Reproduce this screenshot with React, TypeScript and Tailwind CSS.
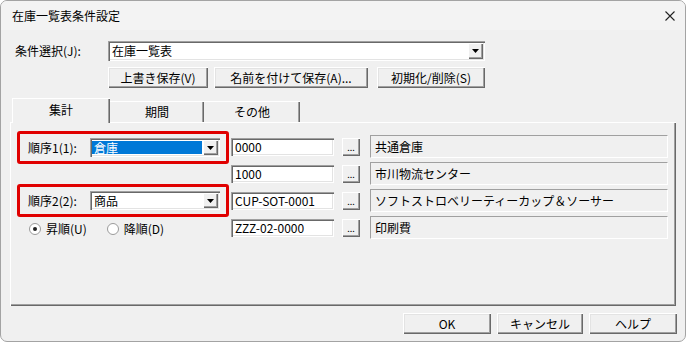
import React from 'react';

const rows = [
  { code: '0000', name: '共通倉庫' },
  { code: '1000', name: '市川物流センター' },
  { code: 'CUP-SOT-0001', name: 'ソフトストロベリーティーカップ＆ソーサー' },
  { code: 'ZZZ-02-0000', name: '印刷費' },
];

function Btn({ w, children }: { w: string; children: React.ReactNode }) {
  return (
    <div
      className={`${w} h-full flex items-center justify-center bg-[#f0f0f0] shadow-[inset_1px_1px_0_#fff,inset_-1px_-1px_0_#696969,inset_-2px_-2px_0_#a0a0a0,inset_2px_2px_0_#e3e3e3]`}
    >
      {children}
    </div>
  );
}

function DropBtn() {
  return (
    <div className="w-[15px] h-full flex items-center justify-center bg-[#f0f0f0] shadow-[inset_1px_1px_0_#fff,inset_-1px_-1px_0_#696969,inset_-2px_-2px_0_#a0a0a0]">
      <svg width="7" height="4" viewBox="0 0 7 4">
        <path d="M0 0H7L3.5 4Z" fill="#000" />
      </svg>
    </div>
  );
}

function Combo({
  value,
  selected,
  w,
}: {
  value: string;
  selected?: boolean;
  w: string;
}) {
  return (
    <div
      className={`${w} h-full flex items-stretch bg-white p-[2px] shadow-[inset_1px_1px_0_#a0a0a0,inset_2px_2px_0_#696969,inset_-1px_-1px_0_#fff,inset_-2px_-2px_0_#e3e3e3]`}
    >
      <div className="flex-1 flex items-center py-[1px] pr-[1px]">
        {selected ? (
          <div className="w-full h-full flex items-center bg-[#0078d7] text-white pl-[2px]">
            {value}
          </div>
        ) : (
          <span className="pl-[2px]">{value}</span>
        )}
      </div>
      <DropBtn />
    </div>
  );
}

function Radio({ checked }: { checked?: boolean }) {
  return (
    <svg width="12" height="12" viewBox="0 0 12 12">
      <circle cx="6" cy="6" r="5.5" fill="#fff" stroke="#9a9a9a" />
      {checked && <circle cx="6" cy="6" r="2" fill="#222" />}
    </svg>
  );
}

function OrderBox({ label, value, selected }: { label: string; value: string; selected?: boolean }) {
  return (
    <div className="w-[212px] h-[33px] border-[3px] border-[#e00000] rounded-[3px] flex items-center pl-[8px]">
      <span className="w-[62px]">{label}</span>
      <div className="h-[19px] flex">
        <Combo w="w-[130px]" value={value} selected={selected} />
      </div>
    </div>
  );
}

export default function App() {
  return (
    <div className="w-[686px] h-[342px] bg-white">
      <div className="w-full h-full rounded-[7px] border border-[#a3a3a3] bg-[#f0f0f0] overflow-hidden flex flex-col font-['Noto_Sans_CJK_JP',sans-serif] text-[12px] leading-none text-black">
        {/* title bar */}
        <div className="h-[29px] shrink-0 flex items-center justify-between pl-[11px] pr-[10px] bg-[#f3f3f3]">
          <span>在庫一覧表条件設定</span>
          <svg width="10" height="10" viewBox="0 0 10 10">
            <path d="M0.5 0.5L9.5 9.5M9.5 0.5L0.5 9.5" stroke="#222" strokeWidth="1.1" />
          </svg>
        </div>

        {/* condition select */}
        <div className="mt-[11px] h-[20px] flex items-center pl-[14px]">
          <span className="w-[93px]">条件選択(J):</span>
          <Combo w="w-[377px]" value="在庫一覧表" />
        </div>

        <div className="mt-[6px] h-[21px] flex pl-[107px]">
          <Btn w="w-[100px]">上書き保存(V)</Btn>
          <div className="w-[6px]" />
          <Btn w="w-[154px]">名前を付けて保存(A)...</Btn>
          <div className="w-[9px]" />
          <Btn w="w-[108px]">初期化/削除(S)</Btn>
        </div>

        {/* tabs */}
        <div className="mt-[10px] h-[24px] flex items-end pl-[11px]">
          <div className="relative z-10 w-[98px] h-[25px] -mb-[1px] flex items-center justify-center pb-[2px] bg-[#f0f0f0] shadow-[inset_1px_1px_0_#fff,inset_-1px_0_0_#696969,inset_-2px_0_0_#a0a0a0]">
            集計
          </div>
          <div className="w-[94px] h-[21px] flex items-center justify-center pt-[1px] shadow-[inset_0_1px_0_#fff,inset_-1px_0_0_#696969,inset_-2px_0_0_#a0a0a0]">
            期間
          </div>
          <div className="w-[96px] h-[21px] flex items-center justify-center pt-[1px] shadow-[inset_0_1px_0_#fff,inset_-1px_0_0_#696969,inset_-2px_0_0_#a0a0a0]">
            その他
          </div>
        </div>

        {/* panel */}
        <div className="ml-[9px] w-[666px] h-[184px] shrink-0 flex shadow-[inset_1px_1px_0_#fff,inset_-1px_-1px_0_#696969,inset_-2px_-2px_0_#a0a0a0]">
          <div className="ml-[7px] mt-[9px] flex flex-col">
            <OrderBox label="順序1(1):" value="倉庫" selected />
            <div className="mt-[20px]">
              <OrderBox label="順序2(2):" value="商品" />
            </div>
            <div className="mt-[5px] h-[14px] flex items-center">
              <div className="ml-[12px]">
                <Radio checked />
              </div>
              <span className="ml-[5px]">昇順(U)</span>
              <div className="ml-[20px]">
                <Radio />
              </div>
              <span className="ml-[5px]">降順(D)</span>
            </div>
          </div>

          <div className="ml-[2px] mt-[13px] flex flex-col gap-[4px]">
            {rows.map((r) => (
              <div key={r.code} className="h-[23px] flex items-center">
                <div className="w-[103px] h-[18px] flex items-center bg-white pl-[4px] shadow-[inset_1px_1px_0_#a0a0a0,inset_2px_2px_0_#696969,inset_-1px_-1px_0_#fff,inset_-2px_-2px_0_#e3e3e3]">
                  {r.code}
                </div>
                <div className="ml-[8px] w-[18px] h-[18px] flex items-end justify-center pb-[4px] text-[9px] shadow-[inset_1px_1px_0_#fff,inset_-1px_-1px_0_#696969,inset_-2px_-2px_0_#a0a0a0]">
                  ...
                </div>
                <div className="ml-[10px] w-[298px] h-[23px] flex items-center pl-[4px] border-t border-l border-[#a0a0a0] border-r-white border-b-white border-r border-b">
                  {r.name}
                </div>
              </div>
            ))}
          </div>
        </div>

        {/* bottom buttons */}
        <div className="mt-[7px] h-[21px] flex justify-end pr-[8px]">
          <Btn w="w-[88px]">OK</Btn>
          <div className="w-[6px]" />
          <Btn w="w-[86px]">キャンセル</Btn>
          <div className="w-[6px]" />
          <Btn w="w-[88px]">ヘルプ</Btn>
        </div>
      </div>
    </div>
  );
}
